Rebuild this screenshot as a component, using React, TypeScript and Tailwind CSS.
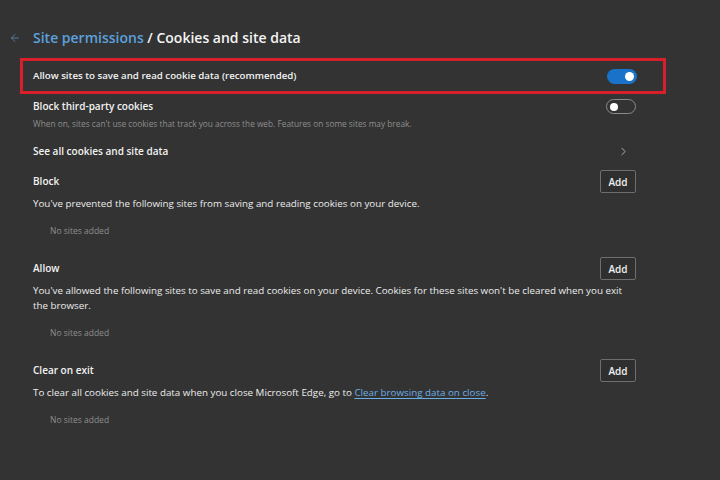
import { ChevronRight, ArrowLeft } from 'lucide-react';

const font = { fontFamily: '"Segoe UI", "Open Sans", "Noto Sans", sans-serif' };

const Toggle = ({ on }: { on: boolean }) =>
    on ? (
        <div className="w-[30px] h-[15px] rounded-full bg-[#1a73c8] flex items-center justify-end pr-[3px]">
            <div className="w-[9px] h-[9px] rounded-full bg-white" />
        </div>
    ) : (
        <div className="w-[30px] h-[15px] rounded-full border border-[#8a8a8a] flex items-center pl-[3px]">
            <div className="w-[8px] h-[8px] rounded-full bg-white" />
        </div>
    );

const AddButton = () => (
    <button className="w-[36px] h-[23px] border border-[#6e6e6e] rounded-[2px] bg-[#2f2f2f] text-[10px] font-semibold text-[#f0f0f0] leading-none">
        Add
    </button>
);

const SiteList = ({ title, children }: { title: string; children: React.ReactNode }) => (
    <div className="flex flex-col">
        <div className="flex items-center justify-between h-[23px]">
            <span className="text-[10px] font-semibold text-[#f2f2f2]">{title}</span>
            <AddButton />
        </div>
        <p className="text-[9.8px] text-[#ececec] leading-[15px] mt-[3px]">{children}</p>
        <p className="text-[8.5px] text-[#8e8e8e] pl-[17px] mt-[14px] leading-[12px]">No sites added</p>
    </div>
);

export default function App() {
    return (
        <div className="w-[720px] h-[480px] bg-[#333333] overflow-hidden" style={font}>
            <div className="flex items-center pt-[27px] pl-[9px] h-[49px]">
                <ArrowLeft size={12} strokeWidth={1.5} className="text-[#5b8fc0]" />
                <h1 className="ml-[12px] text-[14px] font-semibold text-[#f4f4f4] leading-[22px]">
                    <span className="text-[#5ba1dd]">Site permissions</span> / Cookies and site data
                </h1>
            </div>

            <div className="mt-[9px] ml-[20px] w-[646px] h-[36px] border-[3px] border-[#d8202c] flex items-center justify-between pl-[10px] pr-[26px]">
                <span className="text-[9.7px] font-semibold text-[#f2f2f2]">Allow sites to save and read cookie data (recommended)</span>
                <Toggle on />
            </div>

            <div className="pl-[33px] w-[636px]">
                <div className="flex items-start justify-between mt-[4px]">
                    <div className="flex flex-col">
                        <span className="text-[10px] font-semibold text-[#f2f2f2] leading-[16px]">Block third-party cookies</span>
                        <span className="text-[8.3px] text-[#8e8e8e] mt-[4px] leading-[12px]">
                            When on, sites can't use cookies that track you across the web. Features on some sites may break.
                        </span>
                    </div>
                    <div className="mt-[1px]"><Toggle on={false} /></div>
                </div>

                <div className="flex items-center justify-between mt-[12px] h-[18px]">
                    <span className="text-[10px] font-semibold text-[#f2f2f2]">See all cookies and site data</span>
                    <ChevronRight size={13} strokeWidth={1.5} className="text-[#c8c8c8] mr-[6px]" />
                </div>

                <div className="mt-[10px] flex flex-col gap-[20px]">
                    <SiteList title="Block">
                        You've prevented the following sites from saving and reading cookies on your device.
                    </SiteList>
                    <SiteList title="Allow">
                        You've allowed the following sites to save and read cookies on your device. Cookies for these sites won't be cleared when you exit the browser.
                    </SiteList>
                    <SiteList title="Clear on exit">
                        To clear all cookies and site data when you close Microsoft Edge, go to{' '}
                        <a className="text-[#6aaee6] underline underline-offset-2">Clear browsing data on close</a>.
                    </SiteList>
                </div>
            </div>
        </div>
    );
}
